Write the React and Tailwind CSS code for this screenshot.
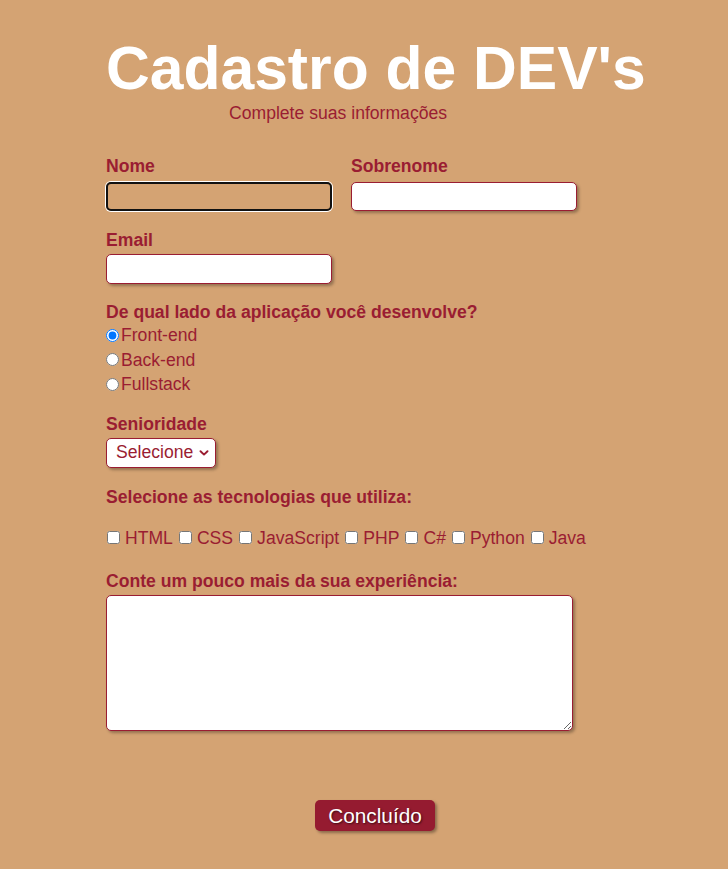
import React from "react";

const techs = ["HTML", "CSS", "JavaScript", "PHP", "C#", "Python", "Java"];

export default function App() {
  return (
    <div className="min-h-[869px] w-full bg-[#d4a373] font-['Liberation_Sans',Arial,sans-serif] text-[#9a1d32]">
      <div className="pl-[106px] pt-[34px]">
        <h1 className="text-[60.6px] font-bold leading-[69px] text-white">Cadastro de DEV's</h1>
        <p className="ml-[123px] mt-0 text-[17.6px] leading-[20px]">Complete suas informações</p>

        <form className="flex flex-col">
          <div className="mt-[33px] flex gap-[19px]">
            <div className="flex w-[226px] flex-col">
              <label className="text-[17.6px] font-bold leading-[20px]">Nome</label>
              <input
                type="text"
                className="mt-[6px] h-[29px] w-[226px] rounded-[5px] border-2 border-[#111] bg-transparent shadow-[0_0_0_1px_#ffffff] outline-none"
              />
            </div>
            <div className="flex w-[226px] flex-col">
              <label className="text-[17.6px] font-bold leading-[20px]">Sobrenome</label>
              <input
                type="text"
                className="mt-[6px] h-[29px] w-[226px] rounded-[5px] border border-[#9a1d32] bg-white shadow-[2px_2px_3px_rgba(0,0,0,0.3)] outline-none"
              />
            </div>
          </div>

          <label className="mt-[19px] text-[17.6px] font-bold leading-[20px]">Email</label>
          <input
            type="email"
            className="mt-[4px] h-[30px] w-[226px] rounded-[5px] border border-[#9a1d32] bg-white shadow-[2px_2px_3px_rgba(0,0,0,0.3)] outline-none"
          />

          <p className="mt-[18px] text-[17.6px] font-bold leading-[20px]">De qual lado da aplicação você desenvolve?</p>
          <div className="mt-[1px] flex flex-col">
            {["Front-end", "Back-end", "Fullstack"].map((o, i) => (
              <label key={o} className="flex h-[24.5px] items-center text-[17.6px] leading-[20px]">
                <input type="radio" name="lado" defaultChecked={i === 0} className="m-0 h-[13px] w-[13px]" />
                <span className="ml-[2px]">{o}</span>
              </label>
            ))}
          </div>

          <label className="mt-[17px] text-[17.6px] font-bold leading-[20px]">Senioridade</label>
          <div className="relative mt-[4px] h-[30px] w-[110px]">
            <select className="h-[30px] w-[110px] appearance-none rounded-[5px] border border-[#9a1d32] bg-white pl-[9px] pr-[20px] text-[17.6px] text-[#9a1d32] shadow-[2px_2px_3px_rgba(0,0,0,0.3)] outline-none">
              <option>Selecione</option>
              <option>Júnior</option>
              <option>Pleno</option>
              <option>Sênior</option>
            </select>
            <svg
              className="pointer-events-none absolute left-[93px] top-[12px] h-[6px] w-[10px]"
              viewBox="0 0 10 6"
              fill="none"
            >
              <path d="M1.5 1.2 L5 4.6 L8.5 1.2" stroke="#9a1d32" strokeWidth="1.9" strokeLinecap="round" strokeLinejoin="round" />
            </svg>
          </div>

          <p className="mt-[19px] text-[17.6px] font-bold leading-[20px]">Selecione as tecnologias que utiliza:</p>
          <div className="mt-[21px] flex h-[20px] items-center text-[17.6px] leading-[20px]">
            {techs.map((t, i) => (
              <React.Fragment key={t}>
                <input type="checkbox" className={`m-0 h-[13px] w-[13px] ${i === 0 ? "ml-[1px]" : "ml-[6px]"}`} />
                <label className="ml-[5px]">{t}</label>
              </React.Fragment>
            ))}
          </div>

          <label className="mt-[23px] text-[17.6px] font-bold leading-[20px]">Conte um pouco mais da sua experiência:</label>
          <textarea className="mt-[4px] h-[136px] w-[467px] rounded-[5px] border border-[#9a1d32] bg-white shadow-[2px_2px_3px_rgba(0,0,0,0.3)] outline-none" />

          <div className="mt-[69px] pl-[209px]">
            <button
              type="button"
              className="h-[31px] w-[120px] rounded-[5px] bg-[#951b30] text-[20.8px] leading-[31px] text-white shadow-[2px_2px_3px_rgba(0,0,0,0.35)] [text-shadow:1px_1px_2px_rgba(0,0,0,0.6)]"
            >
              Concluído
            </button>
          </div>
        </form>
      </div>
    </div>
  );
}
